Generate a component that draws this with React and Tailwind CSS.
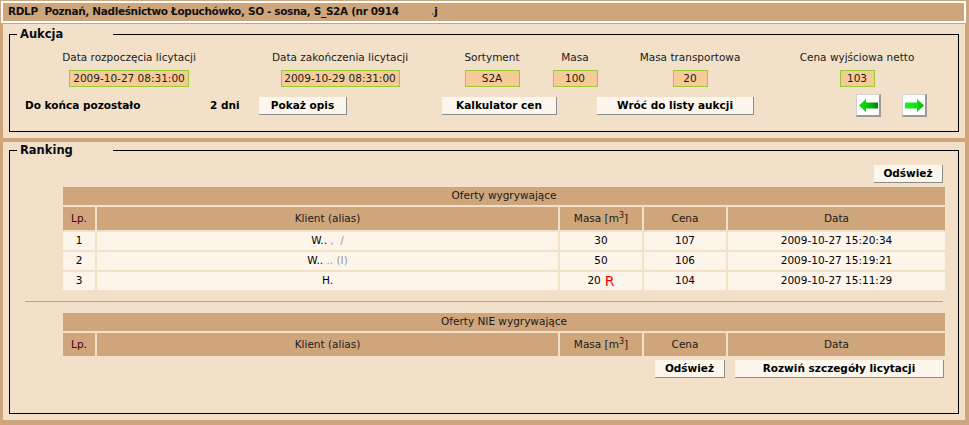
import React from 'react';

const cols = [
  { label: 'Data rozpoczęcia licytacji', value: '2009-10-27 08:31:00', w: 'w-[210px]', box: 'w-[120px]' },
  { label: 'Data zakończenia licytacji', value: '2009-10-29 08:31:00', w: 'w-[212px]', box: 'w-[119px]' },
  { label: 'Sortyment', value: 'S2A', w: 'w-[92px]', box: 'w-[55px]' },
  { label: 'Masa', value: '100', w: 'w-[74px]', box: 'w-[45px]' },
  { label: 'Masa transportowa', value: '20', w: 'w-[156px]', box: 'w-[35px]' },
  { label: 'Cena wyjściowa netto', value: '103', w: 'w-[178px]', box: 'w-[35px]' },
];

const offers = [
  { lp: 1, client: 'W..', rest: ' ,  /', masa: '30', r: false, cena: '107', data: '2009-10-27 15:20:34' },
  { lp: 2, client: 'W..', rest: ' .. (I)', masa: '50', r: false, cena: '106', data: '2009-10-27 15:19:21' },
  { lp: 3, client: 'H.', rest: '', masa: '20', r: true, cena: '104', data: '2009-10-27 15:11:29' },
];

const Btn = ({ children, className = '' }) => (
  <button className={`h-[18px] bg-[#fdf6ec] border-r border-b border-[#8c8c8c] text-[10.5px] font-bold text-black leading-none ${className}`}>
    {children}
  </button>
);

const Arrow = ({ dir }) => (
  <div className="w-[25px] h-[23px] bg-white border border-[#d0d0d0] border-r-2 border-b-2 border-r-[#9a9a9a] border-b-[#9a9a9a] flex items-center justify-center">
    <svg width="19" height="13" viewBox="0 0 19 13">
      <defs>
        <linearGradient id={`g-${dir}`} x1="0" x2="1" y1="0" y2="0">
          {dir === 'left' ? (
            <>
              <stop offset="0" stopColor="#18e018" />
              <stop offset="0.45" stopColor="#08c808" />
              <stop offset="1" stopColor="#087a08" />
            </>
          ) : (
            <>
              <stop offset="0" stopColor="#22ee22" />
              <stop offset="0.6" stopColor="#18e018" />
              <stop offset="1" stopColor="#0aa80a" />
            </>
          )}
        </linearGradient>
      </defs>
      {dir === 'left' ? (
        <polygon points="0,6.5 7,0 7,3.5 19,3.5 19,9.5 7,9.5 7,13" fill={`url(#g-${dir})`} />
      ) : (
        <polygon points="19,6.5 12,0 12,3.5 0,3.5 0,9.5 12,9.5 12,13" fill={`url(#g-${dir})`} />
      )}
    </svg>
  </div>
);

const HeadRow = ({ title }) => (
  <>
    <div className="col-span-5 h-[18px] bg-[#cfa57c] flex items-center justify-center text-[10.5px] text-[#1a1a1a]">{title}</div>
    <div className="h-[23px] bg-[#cfa57c] flex items-end justify-center pb-[3px] text-[10.5px] text-[#4a0016]">Lp.</div>
    <div className="h-[23px] bg-[#cfa57c] flex items-end justify-center pb-[3px] text-[10.5px] text-[#1a1a1a]">Klient (alias)</div>
    <div className="h-[23px] bg-[#cfa57c] flex items-end justify-center pb-[3px] text-[10.5px] text-[#1a1a1a]">
      <span>Masa [m<sup className="text-[8px]">3</sup>]</span>
    </div>
    <div className="h-[23px] bg-[#cfa57c] flex items-end justify-center pb-[3px] text-[10.5px] text-[#1a1a1a]">Cena</div>
    <div className="h-[23px] bg-[#cfa57c] flex items-end justify-center pb-[3px] text-[10.5px] text-[#1a1a1a]">Data</div>
  </>
);

const Legend = ({ children }) => (
  <legend className="ml-[7px] w-[96px] pl-[3px] leading-[16px] text-[11.5px] font-bold text-[#0a0a1a]">{children}</legend>
);

export default function App() {
  return (
    <div className="w-[969px] h-[425px] bg-[#cfa57c] pt-[1px] overflow-hidden font-['DejaVu_Sans',sans-serif] text-black">
      {/* title bar */}
      <div className="ml-[1px] w-[965px] h-[22px] border-2 border-white flex items-center pl-[5px] text-[10.5px] tracking-[-0.35px] font-bold whitespace-pre text-[#111]">
        RDLP  Poznań, Nadleśnictwo Łopuchówko, SO - sosna, S_S2A (nr 0914<span className="ml-[32px] text-[#777]">.</span>j
      </div>

      {/* Aukcja */}
      <div className="mt-[1px] ml-[3px] w-[962px] h-[114px] bg-[#f2e1c8] px-[6px] pt-[2px]">
        <fieldset className="border border-black h-[106px]">
          <Legend>Aukcja</Legend>
          <div className="flex pl-[14px] pt-[8px]">
            {cols.map((c) => (
              <div key={c.label} className={`${c.w} flex flex-col items-center`}>
                <div className="h-[14px] leading-[14px] text-[10.5px] text-[#1a1a1a] whitespace-nowrap">{c.label}</div>
                <div className={`${c.box} h-[17px] mt-[6px] bg-[#f6cb97] border border-[#99cc33] flex items-center justify-center text-[10.5px] text-[#1a1a1a] whitespace-nowrap`}>
                  {c.value}
                </div>
              </div>
            ))}
          </div>
          <div className="flex items-center h-[23px] mt-[7px] pl-[15px]">
            <div className="w-[185px] text-[10.5px] font-bold whitespace-nowrap">Do końca pozostało</div>
            <div className="w-[49px] text-[10.5px] font-bold whitespace-nowrap">2 dni</div>
            <Btn className="w-[88px]">Pokaż opis</Btn>
            <Btn className="w-[115px] ml-[95px]">Kalkulator cen</Btn>
            <Btn className="w-[157px] ml-[40px]">Wróć do listy aukcji</Btn>
            <div className="ml-[102px]"><Arrow dir="left" /></div>
            <div className="ml-[21px]"><Arrow dir="right" /></div>
          </div>
        </fieldset>
      </div>

      {/* Ranking */}
      <div className="mt-[4px] ml-[3px] w-[962px] h-[278px] bg-[#f2e1c8] px-[6px]">
        <fieldset className="border border-black h-[272px]">
          <Legend>Ranking</Legend>
          <div className="flex flex-col">
            <Btn className="w-[69px] self-end mr-[15px] mt-[7px]">Odśwież</Btn>

            <div className="ml-[53px] w-[882px] mt-[4px] grid grid-cols-[32px_461px_82px_82px_217px] gap-[2px]">
              <HeadRow title="Oferty wygrywające" />
              {offers.map((o) => (
                <React.Fragment key={o.lp}>
                  <div className="h-[18px] bg-[#fdf5ea] flex items-center justify-center text-[10.5px]">{o.lp}</div>
                  <div className="h-[18px] bg-[#fdf5ea] flex items-center justify-center text-[10.5px] whitespace-pre">
                    {o.client}<span className="text-[#9a9a9a]">{o.rest}</span>
                  </div>
                  <div className="h-[18px] bg-[#fdf5ea] flex items-center justify-center text-[10.5px]">
                    {o.masa}
                    {o.r && <span className="ml-[4px] text-[14px] leading-none text-[#ff0000]">R</span>}
                  </div>
                  <div className="h-[18px] bg-[#fdf5ea] flex items-center justify-center text-[10.5px]">{o.cena}</div>
                  <div className="h-[18px] bg-[#fdf5ea] flex items-center justify-center text-[10.5px]">{o.data}</div>
                </React.Fragment>
              ))}
            </div>

            <div className="mt-[11px] mx-[15px] h-px bg-[#a6a597]" />

            <div className="ml-[53px] w-[882px] mt-[11px] grid grid-cols-[32px_461px_82px_82px_217px] gap-[2px]">
              <HeadRow title="Oferty NIE wygrywające" />
            </div>
            <div className="ml-[53px] w-[881px] mt-[4px] flex justify-end gap-[10px]">
              <Btn className="w-[70px]">Odśwież</Btn>
              <Btn className="w-[209px]">Rozwiń szczegóły licytacji</Btn>
            </div>
          </div>
        </fieldset>
      </div>
    </div>
  );
}
